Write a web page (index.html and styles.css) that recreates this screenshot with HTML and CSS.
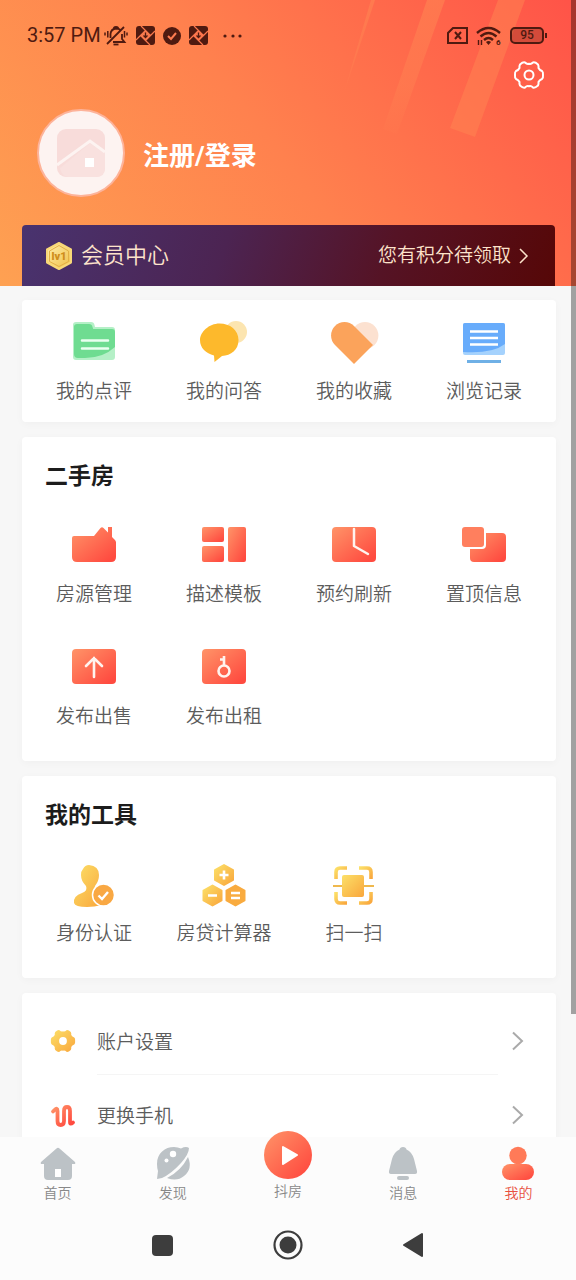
FILE: index.html
```html
<!DOCTYPE html>
<html lang="zh-CN">
<head>
    <meta charset="UTF-8">
    <meta name="viewport" content="width=device-width, initial-scale=1.0">
    <title>我的</title>
    <link rel="stylesheet" href="styles.css">
</head>
<body>
    <!-- shared gradients -->
    <svg class="defs" width="0" height="0" aria-hidden="true">
        <defs>
            <linearGradient id="red" x1="0" y1="0" x2="1" y2="1">
                <stop offset="0" stop-color="#ff9468"/>
                <stop offset="0.9" stop-color="#ff4b40"/>
            </linearGradient>
            <linearGradient id="yellow" x1="0" y1="0" x2="1" y2="1">
                <stop offset="0" stop-color="#fce068"/>
                <stop offset="1" stop-color="#f9a63c"/>
            </linearGradient>
            <linearGradient id="gold" x1="0" y1="0" x2="1" y2="1">
                <stop offset="0" stop-color="#fff0ae"/>
                <stop offset="1" stop-color="#efbe45"/>
            </linearGradient>
            <linearGradient id="stripe" x1="0" y1="0" x2="0" y2="1">
                <stop offset="0" stop-color="#ff8552" stop-opacity="0.6"/>
                <stop offset="0.65" stop-color="#ff8552" stop-opacity="0.4"/>
                <stop offset="1" stop-color="#ff8552" stop-opacity="0.08"/>
            </linearGradient>
        </defs>
    </svg>

    <div class="app">
        <main class="page">
            <header class="hero">
                <svg class="hero-stripes" width="240" height="140" viewBox="336 0 240 140" aria-hidden="true">
                    <path fill="url(#stripe)" d="M371 0h4l-32 96z"/>
                    <path fill="url(#stripe)" d="M427 0h18l-48 134-14-5z"/>
                    <path fill="#ff8552" fill-opacity="0.5" d="M498 0h27l-50 137-25-9z"/>
                </svg>

                <div class="status-bar">
                    <span class="time">3:57 PM</span>
                    <div class="status-left">
                        <svg width="24" height="20" viewBox="0 0 24 20" fill="none" stroke="currentColor" stroke-width="1.800">
                            <path d="M6.500 12V8Q7 3 12 2.500 15 2.500 16.500 4M18 8v5l2.500 3H9"/>
                            <path d="M20 1 3 18M9.500 2q2.500-2 5 0"/>
                            <path d="M1 6.500v3M3.800 5v6.500M20.500 5v6.500M23 6.500v3" stroke-width="1.500"/>
                            <path d="M9.500 18.500h5"/>
                        </svg>
                        <svg width="19" height="19" viewBox="0 0 19 19">
                            <rect width="19" height="19" rx="3" fill="currentColor"/>
                            <path d="M9.500 4.500 14.500 9.500 9.500 14.500 4.500 9.500z" fill="#f9794d"/>
                            <path d="M5 0 14.500 9.500M19 5 9.500 14.500M14 19 4.500 9.500M0 14 9.500 4.500" stroke="#f9794d" stroke-width="1.200"/>
                            <path d="M9.500 6.500v5M7.500 9.500l2 2 2-2" fill="none" stroke="currentColor" stroke-width="1.300"/>
                        </svg>
                        <svg width="18" height="18" viewBox="0 0 18 18">
                            <circle cx="9" cy="9" r="9" fill="currentColor"/>
                            <path d="M5 9l3 3 5-6" fill="none" stroke="#fd7b50" stroke-width="2"/>
                        </svg>
                        <svg width="19" height="19" viewBox="0 0 19 19">
                            <rect width="19" height="19" rx="3" fill="currentColor"/>
                            <path d="M9.500 4.500 14.500 9.500 9.500 14.500 4.500 9.500z" fill="#fc764d"/>
                            <path d="M5 0 14.500 9.500M19 5 9.500 14.500M14 19 4.500 9.500M0 14 9.500 4.500" stroke="#fc764d" stroke-width="1.200"/>
                            <path d="M9.500 6.500v5M7.500 9.500l2 2 2-2" fill="none" stroke="currentColor" stroke-width="1.300"/>
                        </svg>
                        <svg width="34" height="20" viewBox="0 0 34 20" fill="currentColor">
                            <circle cx="9" cy="10" r="1.600"/>
                            <circle cx="17" cy="10" r="1.600"/>
                            <circle cx="24" cy="10" r="1.600"/>
                        </svg>
                    </div>
                    <div class="status-right">
                        <svg width="21" height="17" viewBox="0 0 21 17" fill="none" stroke="currentColor" stroke-width="2">
                            <path d="M6 1h14v15H1V6z"/>
                            <path d="M8 5l6 7M14 5l-6 7"/>
                        </svg>
                        <svg width="26" height="20" viewBox="0 0 26 20" fill="none" stroke="currentColor" stroke-width="2.400">
                            <path d="M1 7q11.500-10 23 0M4.500 10.500q8-7 16 0M8 14q4.500-4 9 0"/>
                            <path d="M10 16q2.500-2 5 0l-2.500 3z" fill="currentColor" stroke="none"/>
                            <path d="M2.500 19v-5M5.500 14v5" stroke-width="1.400"/>
                            <text x="20" y="19" class="wifi-gen">6</text>
                        </svg>
                        <span class="battery">95</span>
                    </div>
                </div>

                <div class="toolbar">
                    <button class="icon-button" type="button" aria-label="设置">
                        <svg width="30" height="30" viewBox="0 0 30 30" fill="none" stroke="#fff" stroke-width="2" stroke-linejoin="round">
                            <path d="M15 3.700Q17 4.500 19 2.500 21 1.800 24 4.500 24.800 6 24.500 8 25.500 10 28 11 29.300 12 29 15 29.300 18 28 19 25.500 20 24.500 22 24.800 24 24 25.500 21 28.200 19 27.500 17 25.500 15 26.300 13 25.500 11 27.500 9 28.200 6 25.500 5.200 24 5.500 22 4.500 20 2 19 .7 18 1 15 .7 12 2 11 4.500 10 5.500 8 5.200 6 6 4.500 9 1.800 11 2.500 13 4.500 15 3.700z"/>
                            <circle cx="15" cy="15" r="4.500"/>
                        </svg>
                    </button>
                </div>

                <a class="profile" href="#login">
                    <span class="avatar">
                        <svg width="50" height="50" viewBox="0 0 50 50">
                            <rect x="1" y="1" width="48" height="48" rx="9" fill="#f8dcda"/>
                            <path d="M4 40 34 15 49 25V40q0 9-9 9H12q-6 0-8-9z" fill="#f9e1df"/>
                            <path d="M1 37 34 13 49 24" fill="none" stroke="#fdf3f1" stroke-width="3"/>
                            <rect x="29" y="30" width="9" height="9" fill="#fff"/>
                        </svg>
                    </span>
                    <span class="profile-name">注册/登录</span>
                </a>

                <a class="member" href="#member">
                    <svg width="28" height="30" viewBox="0 0 28 30">
                        <path d="M14 2 26 8.500V21.500L14 28 2 21.500V8.500z" fill="url(#gold)" stroke="#f8d878" stroke-width="2" stroke-linejoin="round"/>
                        <path d="M14 4.500 23.500 10V20.500L14 25.500 4.500 20.500V10z" fill="none" stroke="#e3b045"/>
                        <text x="14" y="19" text-anchor="middle" class="level">lv1</text>
                    </svg>
                    <span class="member-title">会员中心</span>
                    <span class="member-note">您有积分待领取</span>
                    <svg width="10" height="16" viewBox="0 0 10 16" fill="none" stroke="currentColor" stroke-width="1.500">
                        <path d="M1 1l7 7-7 7"/>
                    </svg>
                </a>
            </header>

            <section class="card card-quick">
                <nav class="grid">
                    <a class="item" href="#reviews">
                        <svg class="item-icon" viewBox="0 0 44 44">
                            <path d="M4 2H19q3 0 3.500 3l.5 2H40q3 0 3 3V37q0 3-3 3H4q-3 0-3-3V5q0-3 3-3z" fill="#b5f0c7"/>
                            <path d="M5 4H17q3 0 3.500 3l.7 2H40q3 0 3 3V27Q31 38 13 38H6q-4 0-4-4V7q0-3 3-3z" fill="#6fdc91"/>
                            <path d="M10 20.500H36M10 28.500H36" stroke="#eafff0" stroke-width="2.500" stroke-linecap="round"/>
                        </svg>
                        <span>我的点评</span>
                    </a>
                    <a class="item" href="#answers">
                        <svg class="item-icon" viewBox="0 0 44 44">
                            <circle cx="34" cy="12" r="11" fill="#fce5b0"/>
                            <path d="M17.500 3.500C28 3.500 36.500 10 36.500 20S29 35.500 20 36L12.500 42 12 35.500C4 33.500-2 28-2 20S7 3.500 17.500 3.500z" fill="#fdb92c"/>
                        </svg>
                        <span>我的问答</span>
                    </a>
                    <a class="item" href="#favorites">
                        <svg class="item-icon" viewBox="0 0 44 44">
                            <circle cx="33" cy="15.500" r="13.400" fill="#fce1d0"/>
                            <path d="M22 44 3 25A13.400 13.400 0 0 1 22 6L41 25z" fill="#fba35b"/>
                        </svg>
                        <span>我的收藏</span>
                    </a>
                    <a class="item" href="#history">
                        <svg class="item-icon" viewBox="0 0 44 44">
                            <rect x="1" y="3" width="42" height="32" rx="2" fill="#a5d2fd"/>
                            <path d="M3 3H41q2 0 2 2V24Q30 34 1 32V5q0-2 2-2z" fill="#68acfb"/>
                            <path d="M8 11.500H36M8 18H36M8 24.500H36" stroke="#fff" stroke-width="2.600"/>
                            <path d="M5 41.500H39" stroke="#6fb0e6" stroke-width="3"/>
                        </svg>
                        <span>浏览记录</span>
                    </a>
                </nav>
            </section>

            <section class="card">
                <h2>二手房</h2>
                <nav class="grid">
                    <a class="item" href="#manage">
                        <svg class="item-icon" viewBox="0 0 44 44">
                            <path d="M2 13H22L28.500 5q1.500-1.500 3 0L36 9.500V4h4V14l3 3q1 1 1 2.500V34q0 5-5 5H5q-5 0-5-5V15q0-2 2-2z" fill="url(#red)"/>
                        </svg>
                        <span>房源管理</span>
                    </a>
                    <a class="item" href="#templates">
                        <svg class="item-icon" viewBox="0 0 44 44" fill="url(#red)">
                            <rect x="0" y="4" width="22" height="15" rx="2"/>
                            <rect x="0" y="23" width="22" height="16" rx="2"/>
                            <rect x="26" y="4" width="18" height="35" rx="2"/>
                        </svg>
                        <span>描述模板</span>
                    </a>
                    <a class="item" href="#refresh">
                        <svg class="item-icon" viewBox="0 0 44 44">
                            <rect y="4" width="44" height="35" rx="4" fill="url(#red)"/>
                            <path d="M22 6V23L36 31" fill="none" stroke="#fff3ee" stroke-width="2.500" stroke-linecap="round" stroke-linejoin="round"/>
                        </svg>
                        <span>预约刷新</span>
                    </a>
                    <a class="item" href="#top">
                        <svg class="item-icon" viewBox="0 0 44 44">
                            <rect x="8" y="10" width="36" height="29" rx="4" fill="url(#red)"/>
                            <rect x="-1" y="3" width="25" height="23" rx="4" fill="#fff"/>
                            <rect x="0" y="4" width="22" height="20" rx="3" fill="#ff7f5e"/>
                        </svg>
                        <span>置顶信息</span>
                    </a>
                    <a class="item" href="#sell">
                        <svg class="item-icon" viewBox="0 0 44 44">
                            <rect y="4" width="44" height="35" rx="4" fill="url(#red)"/>
                            <path d="M22 32V13M14 21l8-8 8 8" fill="none" stroke="#fff3ee" stroke-width="2.600" stroke-linecap="round"/>
                        </svg>
                        <span>发布出售</span>
                    </a>
                    <a class="item" href="#rent">
                        <svg class="item-icon" viewBox="0 0 44 44">
                            <rect y="4" width="44" height="35" rx="4" fill="url(#red)"/>
                            <circle cx="22" cy="26" r="5.500" fill="none" stroke="#fff3ee" stroke-width="2.600"/>
                            <path d="M22 20V11M22 14.500h-4" stroke="#fff3ee" stroke-width="2.600"/>
                        </svg>
                        <span>发布出租</span>
                    </a>
                </nav>
            </section>

            <section class="card">
                <h2>我的工具</h2>
                <nav class="grid">
                    <a class="item" href="#verify">
                        <svg class="item-icon" viewBox="0 0 44 44">
                            <path d="M17 3q10 1 10 10 0 6-4 11-2 5 3 7l4 12Q22 45 15 45 3 45 2 41 1 34 10 31q6-2 4-7-5-5-5-11 0-4 2-6 2-4 6-4z" fill="url(#yellow)"/>
                            <circle cx="31.500" cy="33" r="11" fill="#f9a843" stroke="#fff" stroke-width="1.500"/>
                            <path d="M26.500 33.500l3.500 3.500 6-7" fill="none" stroke="#fff" stroke-width="2.400"/>
                        </svg>
                        <span>身份认证</span>
                    </a>
                    <a class="item" href="#loan">
                        <svg class="item-icon" viewBox="0 0 44 44">
                            <g fill="url(#yellow)" stroke="url(#yellow)" stroke-width="2" stroke-linejoin="round">
                                <path d="M22 3 31 8V18L22 23 13 18V8z"/>
                                <path d="M10.500 23.500 19.500 28.500V38.500L10.500 43.500 1.500 38.500V28.500z"/>
                            </g>
                            <path d="M33.500 23.500 42.500 28.500V38.500L33.500 43.500 24.500 38.500V28.500z" fill="#f9ab3f" stroke="#f9ab3f" stroke-width="2" stroke-linejoin="round"/>
                            <path d="M22 8.500V17.500M17.500 13H26.500M6 33.500H15M29 31H38M29 36H38" stroke="#fff" stroke-width="2.600"/>
                        </svg>
                        <span>房贷计算器</span>
                    </a>
                    <a class="item" href="#scan">
                        <svg class="item-icon" viewBox="0 0 44 44">
                            <g fill="none" stroke="url(#yellow)" stroke-width="3.600">
                                <path d="M15 6H8Q4 6 4 10V17"/>
                                <path d="M27 6H35Q39 6 39 10V17"/>
                                <path d="M15 41H8Q4 41 4 37V30"/>
                                <path d="M27 41H35Q39 41 39 37V30"/>
                            </g>
                            <path d="M1 24H42" stroke="#efb84d" stroke-width="2"/>
                            <rect x="10" y="13" width="22" height="22" rx="2" fill="url(#yellow)"/>
                        </svg>
                        <span>扫一扫</span>
                    </a>
                </nav>
            </section>

            <section class="card card-list">
                <a class="row" href="#account">
                    <svg width="26" height="26" viewBox="0 0 30 30">
                        <path d="M15 3.700Q17 4.500 19 2.500 21 1.800 24 4.500 24.800 6 24.500 8 25.500 10 28 11 29.300 12 29 15 29.300 18 28 19 25.500 20 24.500 22 24.800 24 24 25.500 21 28.200 19 27.500 17 25.500 15 26.300 13 25.500 11 27.500 9 28.200 6 25.500 5.200 24 5.500 22 4.500 20 2 19 .7 18 1 15 .7 12 2 11 4.500 10 5.500 8 5.200 6 6 4.500 9 1.800 11 2.500 13 4.500 15 3.700z" fill="url(#yellow)"/>
                        <circle cx="15" cy="15" r="4.500" fill="#fff"/>
                    </svg>
                    <span class="row-label">账户设置</span>
                    <svg class="arrow" width="12" height="20" viewBox="0 0 12 20"><path d="M1 1.500 10 10 1 18.500"/></svg>
                </a>
                <a class="row" href="#phone">
                    <svg width="26" height="26" viewBox="0 0 26 26">
                        <path d="M3 9.500 4.500 8Q7.500 5 7.500 9V19q0 4 3.200 4t3.300-4V9q0-4 3-4t3 4V20q0 3 3 .5" fill="none" stroke="url(#red)" stroke-width="3.800" stroke-linecap="round" stroke-linejoin="round"/>
                    </svg>
                    <span class="row-label">更换手机</span>
                    <svg class="arrow" width="12" height="20" viewBox="0 0 12 20"><path d="M1 1.500 10 10 1 18.500"/></svg>
                </a>
            </section>

            <div class="scrollbar"></div>
        </main>

        <nav class="tab-bar">
            <a class="tab" href="#home">
                <svg width="36" height="36" viewBox="0 0 36 36">
                    <path d="M16.500 3.500q1.500-1.500 3 0L35 17q1 2-1 2H32V31q0 4-4 4H8q-4 0-4-4V19H2q-2 0-1-2z" fill="#bcc2c6"/>
                    <path d="M15 24h6v8h-6z" fill="#fff"/>
                </svg>
                <span>首页</span>
            </a>
            <a class="tab" href="#discover">
                <svg width="36" height="36" viewBox="0 0 36 36">
                    <path d="M2 19C2 8 10 2 19 2q4 0 7 1.500Q31 1 34 3q0 6-8 15Q16 29 7 33L2 34 3 26Q2 23 2 19z" fill="#bcc2c6"/>
                    <path d="M33 12Q38 24 29 31 22 37 12 33 26 26 33 12z" fill="#bcc2c6"/>
                    <circle cx="18" cy="9" r="3.200" fill="#fff"/>
                    <circle cx="11.500" cy="15.500" r="2" fill="#fff"/>
                </svg>
                <span>发现</span>
            </a>
            <a class="tab" href="#video">
                <svg class="play" width="48" height="48" viewBox="0 0 48 48">
                    <circle cx="24" cy="24" r="24" fill="url(#red)"/>
                    <path d="M19 16 33 24 19 33z" fill="#fff" stroke="#fff" stroke-width="2" stroke-linejoin="round"/>
                </svg>
                <span>抖房</span>
            </a>
            <a class="tab" href="#messages">
                <svg width="36" height="36" viewBox="0 0 36 36">
                    <path d="M18 2q3 0 3.500 2.500Q27 7 29 14l3 12q.5 3-2 3H6q-2.500 0-2-3L7 14Q9 7 14.500 4.500 15 2 18 2z" fill="#bcc2c6"/>
                    <rect x="12" y="31" width="12" height="4" rx="2" fill="#bcc2c6"/>
                </svg>
                <span>消息</span>
            </a>
            <a class="tab active" href="#me">
                <svg width="36" height="36" viewBox="0 0 36 36">
                    <circle cx="18" cy="10.500" r="8.700" fill="#ff7a58"/>
                    <path d="M10 19H26A8 8 0 0 1 26 35H10A8 8 0 0 1 10 19z" fill="url(#red)"/>
                </svg>
                <span>我的</span>
            </a>
        </nav>

        <div class="system-nav">
            <button class="icon-button" type="button" aria-label="最近任务">
                <svg width="30" height="30" viewBox="0 0 30 30"><rect x="4" y="5" width="21" height="21" rx="4" fill="#3d3d3d"/></svg>
            </button>
            <button class="icon-button" type="button" aria-label="主屏幕">
                <svg width="30" height="30" viewBox="0 0 30 30">
                    <circle cx="15" cy="15" r="13.500" fill="none" stroke="#3d3d3d" stroke-width="2.200"/>
                    <circle cx="15" cy="15" r="8.500" fill="#3d3d3d"/>
                </svg>
            </button>
            <button class="icon-button" type="button" aria-label="返回">
                <svg width="30" height="30" viewBox="0 0 30 30"><path d="M6 15 24 4V26z" fill="#3d3d3d" stroke="#3d3d3d" stroke-width="2" stroke-linejoin="round"/></svg>
            </button>
        </div>
    </div>
</body>
</html>
```

FILE: styles.css
```css
* {
    box-sizing: border-box;
}
body {
    margin: 0;
    background: #fcfcfc;
    color: #5c5c5c;
    font-family: Roboto, "Noto Sans CJK SC", sans-serif;
    font-weight: 350;
}
a {
    color: inherit;
    text-decoration: none;
}
svg {
    display: block;
    flex-shrink: 0;
    overflow: visible;
}
.defs {
    position: absolute;
}
.icon-button {
    padding: 0;
    border: none;
    background: none;
}
.app {
    display: flex;
    flex-direction: column;
    height: 100vh;
}
.page {
    position: relative;
    flex: 1;
    min-height: 0;
    overflow: hidden;
    background: #f7f7f7;
}

/* header */
.hero {
    position: relative;
    padding: 25px 21px 0 22px;
    margin-bottom: 14px;
    background: linear-gradient(52deg, #fea152 0%, #ff814e 48%, #ff5348 100%);
}
.hero-stripes {
    position: absolute;
    top: 0;
    right: 0;
}
.status-bar,
.toolbar,
.profile,
.member {
    position: relative;
    display: flex;
    align-items: center;
}
.status-bar {
    height: 21px;
    padding: 0 8px 0 5px;
    color: #4f1a10;
}
.time {
    font-size: 20px;
    font-weight: 400;
    line-height: 21px;
}
.status-left,
.status-right {
    display: flex;
    align-items: center;
    gap: 8px;
}
.status-left {
    margin-left: 3px;
}
.status-right {
    margin-left: auto;
}
.wifi-gen {
    fill: currentColor;
    stroke: none;
    font-size: 8px;
    font-weight: 700;
}
.battery {
    position: relative;
    width: 34px;
    margin-right: 3px;
    border: 2px solid;
    border-radius: 5px;
    background: rgba(79, 26, 16, 0.25);
    font-size: 12px;
    font-weight: 500;
    line-height: 13px;
    text-align: center;
}
.battery::after {
    content: "";
    position: absolute;
    top: 4px;
    right: -5px;
    width: 2px;
    height: 5px;
    background: currentColor;
}
.toolbar {
    justify-content: flex-end;
    margin-top: 14px;
    padding-right: 11px;
}
.profile {
    gap: 18px;
    margin-top: 19px;
    padding-left: 15px;
}
.avatar {
    display: flex;
    align-items: center;
    justify-content: center;
    width: 88px;
    height: 88px;
    border: 2px solid #fdb39a;
    border-radius: 50%;
    background: #fdf3f1;
}
.profile-name {
    color: #fff;
    font-size: 26px;
    font-weight: 700;
}
.member {
    height: 61px;
    margin-top: 28px;
    padding: 0 26px 0 23px;
    border-radius: 4px 4px 0 0;
    background: linear-gradient(110deg, #49336f 0%, #4c2452 38%, #551325 68%, #560707 100%);
    color: #fde3cb;
}
.level {
    fill: #cf8d1c;
    font-size: 11px;
    font-weight: 900;
}
.member-title,
.member-note {
    line-height: 26px;
}
.member-title {
    margin-left: 8px;
    font-size: 22px;
}
.member-note {
    margin-left: auto;
    margin-right: 8px;
    font-size: 19px;
}

/* cards */
.card {
    margin: 0 20px 15px 22px;
    padding: 23px 7px 30px;
    border-radius: 4px;
    background: #fff;
    box-shadow: 0 2px 8px rgba(0, 0, 0, 0.03);
}
.card-quick {
    padding: 20px 7px 16px;
}
.card h2 {
    margin: 0 0 29px;
    padding-left: 16px;
    color: #1c1c1c;
    font-size: 23px;
    font-weight: 700;
    line-height: 34px;
}
.grid {
    display: grid;
    grid-template-columns: repeat(4, 1fr);
    row-gap: 36px;
}
.item {
    display: flex;
    flex-direction: column;
    align-items: center;
    gap: 14px;
    font-size: 19px;
    line-height: 28px;
}
.item-icon {
    width: 44px;
    height: 44px;
}

/* settings list */
.card-list {
    padding: 8px 32px 0 28px;
}
.row {
    display: flex;
    align-items: center;
    height: 74px;
    padding-top: 6px;
}
.row-label {
    display: flex;
    align-items: center;
    align-self: stretch;
    flex: 1;
    margin: 0 14px 0 21px;
    border-bottom: 1px solid #f5f5f5;
    font-size: 19px;
}
.arrow {
    fill: none;
    stroke: #aaa;
    stroke-width: 2;
}
.scrollbar {
    position: absolute;
    top: 0;
    right: 0;
    width: 5px;
    height: 1014px;
    background: rgba(0, 0, 0, 0.35);
}

/* bottom bars */
.tab-bar {
    position: relative;
    display: grid;
    grid-template-columns: repeat(5, 1fr);
    height: 73px;
    padding-top: 8px;
    background: #fcfcfc;
}
.tab {
    display: flex;
    flex-direction: column;
    align-items: center;
    gap: 1px;
    color: #888;
    font-size: 14px;
    line-height: 22px;
}
.tab.active {
    color: #e8503f;
}
.play {
    margin-top: -14px;
}
.system-nav {
    display: flex;
    align-items: center;
    justify-content: center;
    gap: 95px;
    height: 70px;
}
```
